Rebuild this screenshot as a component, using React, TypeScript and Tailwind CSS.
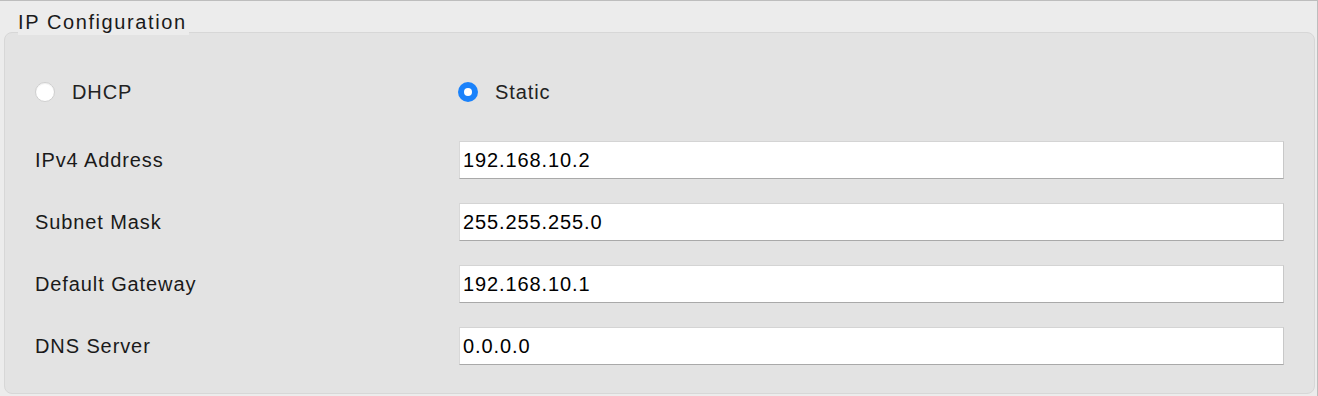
const rows = [
  { label: 'IPv4 Address', value: '192.168.10.2' },
  { label: 'Subnet Mask', value: '255.255.255.0' },
  { label: 'Default Gateway', value: '192.168.10.1' },
  { label: 'DNS Server', value: '0.0.0.0' },
];

const Radio = ({ checked, label }: { checked: boolean; label: string }) => (
  <label className="flex items-center gap-[17px]">
    {checked ? (
      <span className="flex h-5 w-5 items-center justify-center rounded-full bg-[#1a82fb]">
        <span className="h-[8px] w-[8px] rounded-full bg-white" />
      </span>
    ) : (
      <span className="h-5 w-5 rounded-full border border-[#cfcfcf] bg-white shadow-[inset_0_1px_1px_rgba(0,0,0,0.06)]" />
    )}
    <span className="text-[20px] tracking-[0.9px] text-[#222]">{label}</span>
  </label>
);

export default function App() {
  return (
    <div
      className="relative h-[396px] w-[1318px] border-t border-r border-[#bdbdbd] bg-[#ececec] pt-[31px] pl-1"
      style={{ fontFamily: '"Liberation Sans", Arial, sans-serif' }}
    >
      <div className="absolute left-[18px] top-[9px] bg-[#ececec] pr-[2px] text-[20px] leading-[25px] tracking-[1.6px] text-[#1a1a1a]">
        IP Configuration
      </div>
      <div className="h-[362px] w-[1311px] rounded-lg border border-[#d7d7d7] bg-[#e3e3e3] pl-[30px] pr-[30px]">
        <div className="flex h-[108px] items-center pt-[10px] pb-0">
          <div className="w-[423px]">
            <Radio checked={false} label="DHCP" />
          </div>
          <Radio checked label="Static" />
        </div>
        <div className="flex flex-col gap-6">
          {rows.map((r) => (
            <div key={r.label} className="flex items-center">
              <div className="w-[424px] text-[20px] tracking-[0.9px] text-[#1a1a1a]">{r.label}</div>
              <div className="flex h-[38px] flex-1 items-center border border-t-[#d4d4d4] border-l-[#d8d8d8] border-r-[#c8c8c8] border-b-[#a9a9a9] bg-white pl-[3px] text-[20px] tracking-[0.9px] text-black">
                {r.value}
              </div>
            </div>
          ))}
        </div>
      </div>
    </div>
  );
}
